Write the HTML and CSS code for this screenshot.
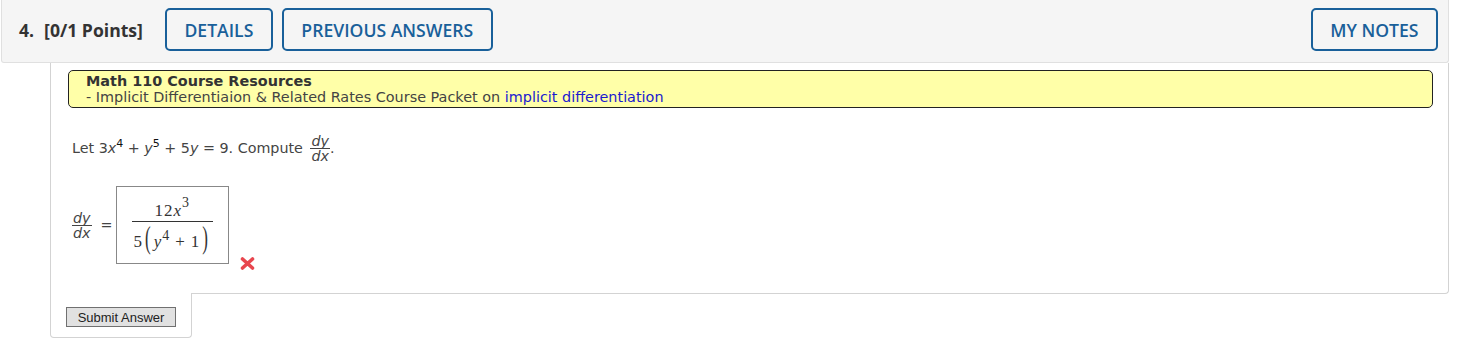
FILE: index.html
```html
<!DOCTYPE html>
<html>
<head>
<meta charset="utf-8">
<link rel="stylesheet" href="styles.css">
</head>
<body>
<div class="page">
  <div class="qhead">
    <div class="qnum"><span>4.</span><span>[0/1 Points]</span></div>
    <button class="hbtn">DETAILS</button>
    <button class="hbtn">PREVIOUS ANSWERS</button>
    <span class="spacer"></span>
    <button class="hbtn last">MY NOTES</button>
  </div>
  <div class="qbody">
    <div class="resources">
      <div class="res-title">Math 110 Course Resources</div>
      <div>- Implicit Differentiaion &amp; Related Rates Course Packet on <a class="link" href="#">implicit differentiation</a></div>
    </div>
    <p class="prompt">Let 3<i>x</i><sup>4</sup> + <i>y</i><sup>5</sup> + 5<i>y</i> = 9. Compute <span class="frac inline"><span class="fnum"><i>dy</i></span><span class="fden"><i>dx</i></span></span>.</p>
    <div class="answer">
      <span class="frac"><span class="fnum"><i>dy</i></span><span class="fden"><i>dx</i></span></span>
      <span class="eq">=</span>
      <div class="ansbox">
        <div class="mfrac">
          <div class="mnum">12<i>x</i><sup>3</sup></div>
          <div class="mden">5<span class="paren">(</span><i>y</i><sup>4</sup><span class="mop">+</span>1<span class="paren">)</span></div>
        </div>
      </div>
      <svg class="wrong" width="15" height="13" viewBox="0 0 15 13">
        <path d="M2.5 2 L12.5 11 M12.5 2 L2.5 11" stroke="#e8464e" stroke-width="3.6" stroke-linecap="round"/>
      </svg>
    </div>
  </div>
  <div class="submit"><button class="sbtn">Submit Answer</button></div>
</div>
</body>
</html>
```

FILE: styles.css
```css
body {
  margin: 0;
  background: #fff;
  font-family: "DejaVu Sans", Verdana, sans-serif;
}
.page {
  padding-left: 1px;
  width: 1448px;
}
.qhead {
  display: flex;
  align-items: center;
  height: 63px;
  box-sizing: border-box;
  padding: 8px 10px 11px 17px;
  background: #f5f5f5;
  border: 1px solid #e0e0e0;
  border-top: none;
  border-radius: 0 0 3px 3px;
  font-family: "Open Sans", sans-serif;
}
.qnum {
  display: flex;
  gap: 10px;
  font-size: 17.6px;
  font-weight: 700;
  color: #333;
  margin-right: 22px;
}
.hbtn {
  height: 43px;
  box-sizing: border-box;
  border: 2px solid #19609a;
  border-radius: 5px;
  background: transparent;
  color: #19609a;
  font-family: "Open Sans", sans-serif;
  font-weight: 600;
  font-size: 17.6px;
  padding: 0 17.5px;
  margin-right: 9px;
}
.hbtn.last { margin-right: 0; }
.spacer { flex: 1; }

.qbody {
  margin-left: 49px;
  border: 1px solid #d3d3d3;
  border-top: none;
  border-radius: 0 0 4px 0;
  padding: 7px 15px 29px 17px;
}
.resources {
  background: #ffffa8;
  border: 1px solid #222;
  border-radius: 5px;
  padding: 2px 17px;
  font-size: 14.4px;
  line-height: 16px;
  color: #444;
}
.res-title {
  font-weight: bold;
  color: #333;
}
.link {
  color: #1a1ad0;
  text-decoration: none;
}
.prompt {
  margin: 26px 0 0 4px;
  font-size: 14.3px;
  color: #444;
  line-height: 16px;
}
.prompt sup {
  font-size: 11px;
  color: #111;
  line-height: 0;
}
.frac {
  display: inline-flex;
  flex-direction: column;
  vertical-align: middle;
  text-align: center;
  line-height: 14px;
  font-size: 14.3px;
  color: #444;
}
.frac.inline {
  margin-left: 3px;
}
.fnum {
  border-bottom: 1px solid #444;
  padding: 0 1px;
}
.answer {
  display: flex;
  align-items: center;
  margin: 23px 0 0 4px;
}
.eq {
  font-size: 14.3px;
  color: #444;
  margin: 0 3px 0 9px;
}
.ansbox {
  border: 1px solid #888;
  padding: 13px 15px 1px;
}
.mfrac {
  display: flex;
  flex-direction: column;
  text-align: center;
  font-family: "Liberation Serif", serif;
  font-size: 17px;
  letter-spacing: 1px;
  color: #333;
}
.mnum {
  line-height: 21px;
  border-bottom: 1px solid #333;
}
.mnum sup, .mden sup {
  font-size: 14px;
  line-height: 0;
  vertical-align: 9px;
}
.mden sup {
  vertical-align: 7px;
}
.mden {
  line-height: 40px;
  padding: 0 2px;
}
.paren {
  display: inline-block;
  line-height: 17px;
  transform: translateY(-3px) scaleY(1.8);
  margin: 0 2px;
}
.mop {
  margin: 0 5px;
}
.wrong {
  align-self: flex-end;
  margin: 0 0 -6px 11px;
}
.submit {
  margin-left: 49px;
  margin-top: -1px;
  width: 142px;
  box-sizing: border-box;
  background: #fff;
  border: 1px solid #d3d3d3;
  border-top: none;
  border-radius: 0 0 4px 4px;
  padding: 14px 0 10px 15px;
}
.sbtn {
  display: block;
  width: 110px;
  height: 20px;
  padding: 0;
  background: #e1e1e1;
  border: 1px solid #707070;
  border-radius: 0;
  font-family: "Liberation Sans", Arial, sans-serif;
  font-size: 13px;
  color: #222;
}
```
